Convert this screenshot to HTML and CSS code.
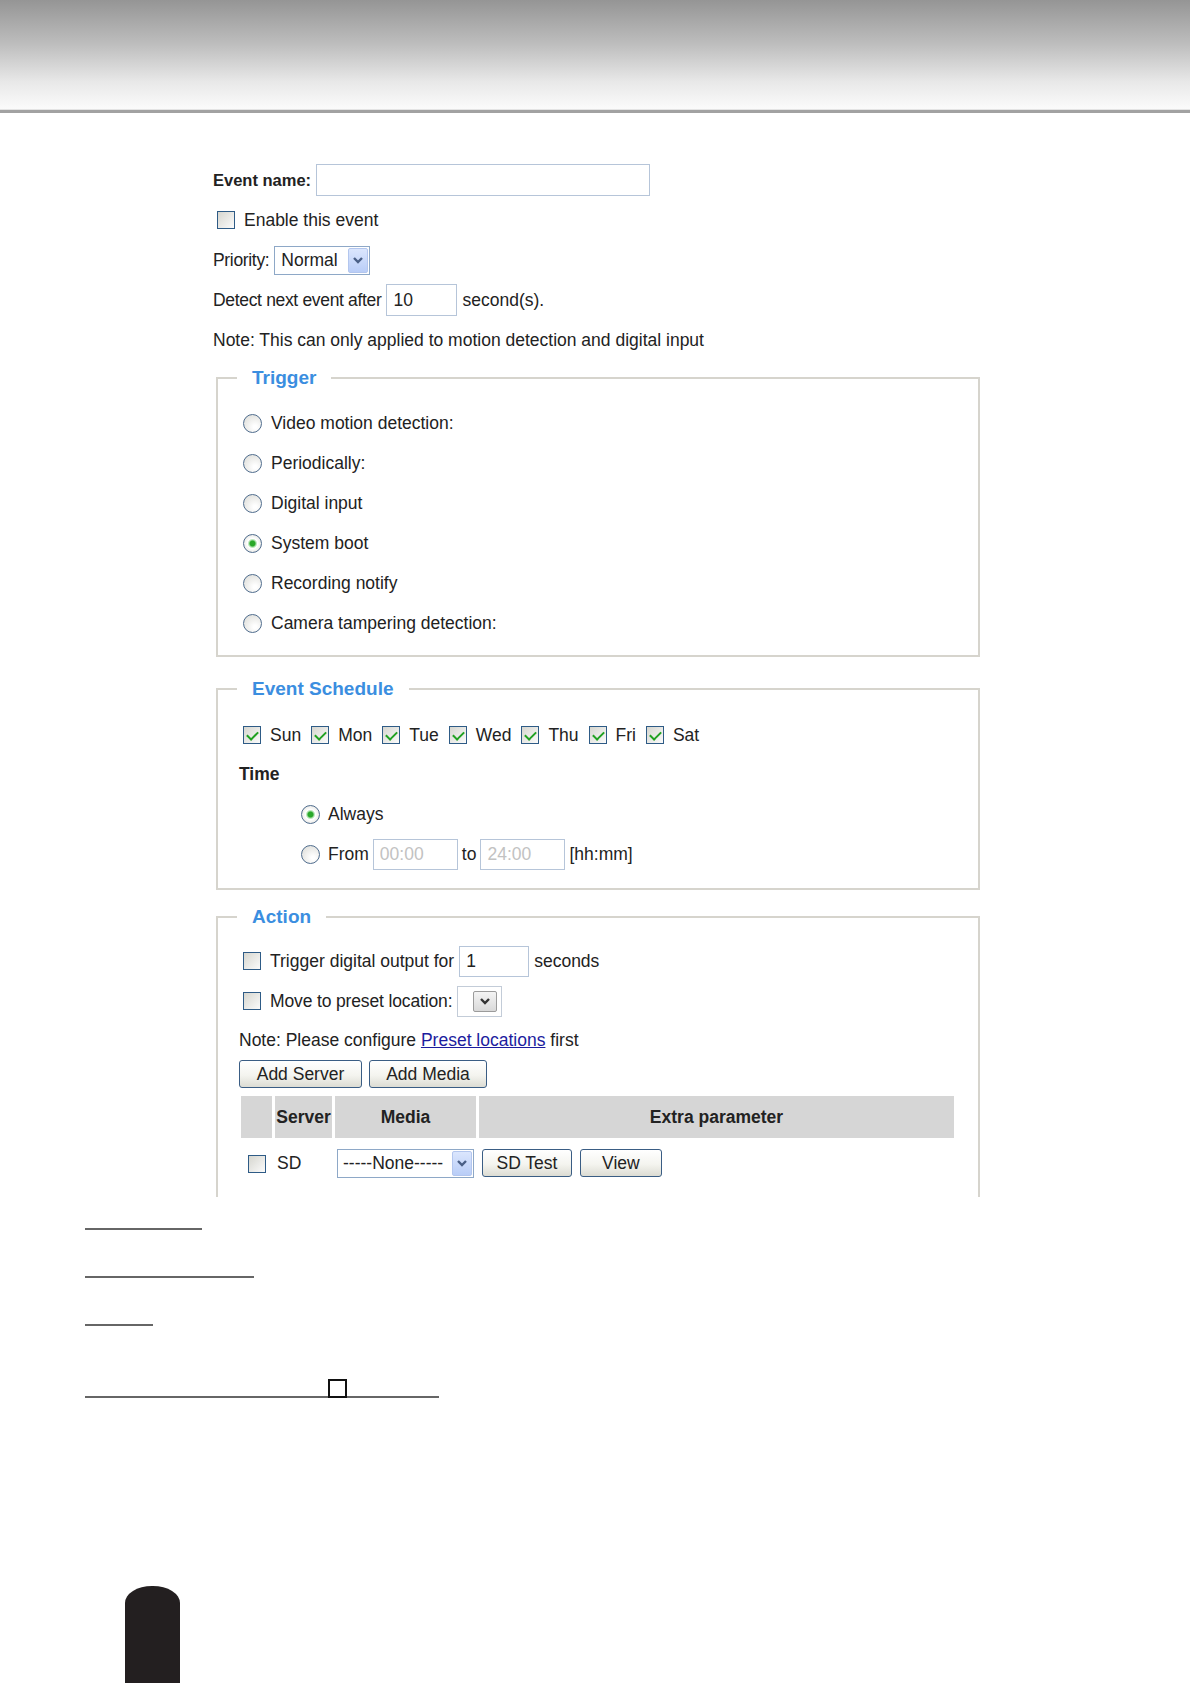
FILE: index.html
```html
<!DOCTYPE html>
<html lang="en">
<head>
    <meta charset="UTF-8">
    <meta name="viewport" content="width=device-width, initial-scale=1.0">
    <title>Event Settings</title>
    <link rel="stylesheet" href="styles.css">
</head>
<body>
    <div class="page-header"></div>
    <div class="header-rule"></div>

    <div class="form-area">
        <div class="row">
            <label class="strong name-label" for="eventName">Event name:</label>
            <input type="text" id="eventName" class="text-input name-input">
        </div>
        <div class="row">
            <input type="checkbox" class="check" id="enableEvent">
            <label for="enableEvent">Enable this event</label>
        </div>
        <div class="row">
            <span class="tight">Priority:</span>
            <span class="select priority-select">
                <span class="select-value">Normal</span>
                <span class="select-btn">
                    <svg width="12" height="8" viewBox="0 0 12 8"><polyline points="2,2 6,6 10,2" fill="none" stroke="#4a5f86" stroke-width="2.4"/></svg>
                </span>
            </span>
        </div>
        <div class="row">
            <label class="tight" for="detectAfter">Detect next event after</label>
            <input type="text" id="detectAfter" class="text-input short-input" value="10">
            <span>second(s).</span>
        </div>
        <div class="row">
            <span>Note: This can only applied to motion detection and digital input</span>
        </div>

        <fieldset class="group trigger-group">
            <legend>Trigger</legend>
            <div class="row">
                <input type="radio" class="radio" name="trigger" id="trVideo">
                <label for="trVideo">Video motion detection:</label>
            </div>
            <div class="row">
                <input type="radio" class="radio" name="trigger" id="trPeriod">
                <label for="trPeriod">Periodically:</label>
            </div>
            <div class="row">
                <input type="radio" class="radio" name="trigger" id="trDigital">
                <label for="trDigital">Digital input</label>
            </div>
            <div class="row">
                <input type="radio" class="radio" name="trigger" id="trBoot" checked>
                <label for="trBoot">System boot</label>
            </div>
            <div class="row">
                <input type="radio" class="radio" name="trigger" id="trRecord">
                <label for="trRecord">Recording notify</label>
            </div>
            <div class="row">
                <input type="radio" class="radio" name="trigger" id="trTamper">
                <label for="trTamper">Camera tampering detection:</label>
            </div>
        </fieldset>

        <fieldset class="group schedule-group">
            <legend>Event Schedule</legend>
            <div class="row days-row">
                <span class="day"><input type="checkbox" class="check" checked>Sun</span>
                <span class="day"><input type="checkbox" class="check" checked>Mon</span>
                <span class="day"><input type="checkbox" class="check" checked>Tue</span>
                <span class="day"><input type="checkbox" class="check" checked>Wed</span>
                <span class="day"><input type="checkbox" class="check" checked>Thu</span>
                <span class="day"><input type="checkbox" class="check" checked>Fri</span>
                <span class="day"><input type="checkbox" class="check" checked>Sat</span>
            </div>
            <div class="row">
                <span class="strong">Time</span>
            </div>
            <div class="row time-row">
                <input type="radio" class="radio" name="time" id="timeAlways" checked>
                <label for="timeAlways">Always</label>
            </div>
            <div class="row time-row">
                <input type="radio" class="radio" name="time" id="timeFrom">
                <label for="timeFrom">From</label>
                <input type="text" class="text-input time-input" value="00:00" disabled>
                <span>to</span>
                <input type="text" class="text-input time-input" value="24:00" disabled>
                <span>[hh:mm]</span>
            </div>
        </fieldset>

        <fieldset class="group action-group">
            <legend>Action</legend>
            <div class="row">
                <input type="checkbox" class="check" id="actDigital">
                <label for="actDigital">Trigger digital output for</label>
                <input type="text" class="text-input seconds-input" value="1">
                <span>seconds</span>
            </div>
            <div class="row">
                <input type="checkbox" class="check" id="actPreset">
                <label class="slight" for="actPreset">Move to preset location:</label>
                <span class="select preset-select">
                    <span class="select-btn gray">
                        <svg width="12" height="8" viewBox="0 0 12 8"><polyline points="2,2 6,6 10,2" fill="none" stroke="#333" stroke-width="2.4"/></svg>
                    </span>
                </span>
            </div>
            <div class="row note-row">
                <span>Note: Please configure <a href="#">Preset locations</a> first</span>
            </div>
            <div class="row button-row">
                <button class="btn btn-server">Add Server</button>
                <button class="btn btn-media">Add Media</button>
            </div>
            <table class="server-table">
                <tr>
                    <th class="col-check"></th>
                    <th class="col-server">Server</th>
                    <th class="col-media">Media</th>
                    <th>Extra parameter</th>
                </tr>
                <tr>
                    <td class="cell-check"><input type="checkbox" class="check"></td>
                    <td class="cell-server">SD</td>
                    <td class="cell-media">
                        <span class="select media-select">
                            <span class="select-value">-----None-----</span>
                            <span class="select-btn">
                                <svg width="12" height="8" viewBox="0 0 12 8"><polyline points="2,2 6,6 10,2" fill="none" stroke="#4a5f86" stroke-width="2.4"/></svg>
                            </span>
                        </span>
                    </td>
                    <td class="cell-extra">
                        <button class="btn btn-test">SD Test</button>
                        <button class="btn btn-view">View</button>
                    </td>
                </tr>
            </table>
        </fieldset>
    </div>

    <div class="blanks">
        <div class="blank blank-1"></div>
        <div class="blank blank-2"></div>
        <div class="blank blank-3"></div>
        <div class="blank-box"><span class="tick-box"></span></div>
        <div class="page-tab"></div>
    </div>
</body>
</html>
```

FILE: styles.css
```css
* {
    box-sizing: border-box;
    margin: 0;
    padding: 0;
}

body {
    font-family: "Liberation Sans", Arial, sans-serif;
    font-size: 17.5px;
    color: #222;
    background-color: #fff;
    height: 1684px;
    overflow: hidden;
}

.page-header {
    height: 110px;
    background: linear-gradient(#959595, #bdbdbd 40%, #e8e8e8 75%, #fbfbfb);
    border-bottom: 1px solid #e4e4e4;
}

.header-rule {
    height: 3px;
    background-color: #a2a2a2;
}

/* form, clipped where the page cuts it */
.form-area {
    height: 1084px;
    overflow: hidden;
    padding: 47px 0 0 213px;
}

.row {
    display: flex;
    align-items: center;
    gap: 5px;
    height: 40px;
    white-space: nowrap;
}

.strong {
    font-weight: bold;
}

.name-label {
    font-size: 16.5px;
}

.tight {
    letter-spacing: -0.33px;
}

.slight {
    letter-spacing: -0.14px;
}

.text-input {
    height: 32px;
    border: 1px solid #b6c5d9;
    padding: 0 6px;
    font-family: inherit;
    font-size: 17.5px;
    color: #222;
    background-color: #fff;
}

.text-input:disabled {
    color: #c2c2c2;
    background-color: #fff;
    height: 31px;
}

.name-input {
    width: 334px;
}

.short-input {
    width: 71px;
}

.seconds-input {
    width: 70px;
    height: 31px;
}

.time-input {
    width: 85px;
}

/* select boxes */
.select {
    display: inline-flex;
    align-items: center;
    height: 29px;
    border: 1px solid #8ea8c7;
    padding: 0 1px 0 6px;
    background-color: #fff;
}

.select-value {
    flex: 1;
}

.select-btn {
    width: 20px;
    height: 25px;
    display: flex;
    align-items: center;
    justify-content: center;
    background: linear-gradient(#dbe6fd, #b9cdf7);
    border: 1px solid #b3c6ee;
    border-radius: 2px;
}

.select-btn.gray {
    width: 24px;
    height: 21px;
    background: linear-gradient(#f4f4f4, #d9d9d9);
    border: 1px solid #9b9b9b;
}

.priority-select {
    width: 96px;
}

.preset-select {
    width: 45px;
    height: 31px;
    border-color: #c3ccd8;
    padding: 0 4px 0 15px;
}

.media-select {
    width: 137px;
    padding-left: 5px;
}

/* checkboxes and radios */
.check {
    appearance: none;
    position: relative;
    flex: none;
    width: 18px;
    height: 18px;
    margin: 0 4px 0 4px;
    border: 1px solid #2e5b86;
    background: linear-gradient(135deg, #d6d6cf, #fbfbfb);
}

.check:checked::after {
    content: "";
    position: absolute;
    left: 5px;
    top: 2px;
    width: 5px;
    height: 9px;
    border: solid #21a121;
    border-width: 0 2.5px 2.5px 0;
    transform: rotate(45deg);
}

.radio {
    appearance: none;
    flex: none;
    width: 19px;
    height: 19px;
    margin: 0 4px 0 4px;
    border: 1.5px solid #4f6c8d;
    border-radius: 50%;
    background: radial-gradient(circle at 65% 70%, #fff 10%, #d9d9d4);
}

.radio:checked {
    background: radial-gradient(circle, #29a829 0, #29a829 2.5px, #9fdc9f 3.5px, #fff 5px, #e6e6e2 80%);
}

/* fieldsets */
.group {
    width: 764px;
    margin-left: 3px;
    border: 2px solid #d6d4cd;
    padding: 13px 21px 12px 21px;
}

.group legend {
    margin-left: -2px;
    padding: 0 15px;
    line-height: 24px;
    font-size: 19px;
    font-weight: bold;
    color: #3b8ee0;
}

.trigger-group {
    margin-top: 6px;
}

.schedule-group {
    margin-top: 20px;
    padding-top: 15px;
    padding-bottom: 14px;
}

.action-group {
    margin-top: 15px;
    padding-top: 12px;
    padding-bottom: 60px;
}

.days-row {
    height: 38px;
    gap: 6px;
}

.day {
    display: flex;
    align-items: center;
}

.day .check {
    margin-right: 9px;
}

.group .row > .check,
.group .row > .radio {
    margin-right: 4px;
}

.time-row {
    padding-left: 58px;
    gap: 4px;
}

.time-row .radio {
    margin-right: 6px;
}

.note-row {
    height: 38px;
}

.note-row a {
    color: #1c1c9e;
}

.button-row {
    height: 30px;
    gap: 7px;
}

.btn {
    height: 28px;
    border: 1px solid #3a5d84;
    border-radius: 3px;
    background: linear-gradient(#ffffff, #f4f4ef 55%, #dcdcd3);
    font-family: inherit;
    font-size: 17.5px;
    color: #222;
}

.btn-server {
    width: 123px;
}

.btn-media {
    width: 118px;
}

.btn-test {
    width: 90px;
}

.btn-view {
    width: 82px;
    margin-left: 3px;
}

/* server table */
.server-table {
    margin-top: 4px;
    margin-left: -1px;
    width: 719px;
    border-spacing: 3px;
}

.server-table th {
    height: 42px;
    background-color: #d6d6d6;
    font-weight: bold;
    text-align: center;
}

.col-check {
    width: 31px;
}

.col-server {
    width: 57px;
}

.col-media {
    width: 141px;
}

.server-table td {
    height: 44px;
}

.cell-check {
    text-align: center;
}

.cell-check .check {
    margin: 0;
    vertical-align: middle;
}

.cell-server {
    padding-left: 2px;
}

.cell-media {
    padding-left: 2px;
}

.cell-extra {
    padding-left: 3px;
}

/* blank lines below the form */
.blanks {
    padding-left: 85px;
}

.blank {
    height: 2px;
    background-color: #666;
}

.blank-1 {
    width: 117px;
    margin-top: 31px;
}

.blank-2 {
    width: 169px;
    margin-top: 46px;
}

.blank-3 {
    width: 68px;
    margin-top: 46px;
}

.blank-box {
    display: flex;
    align-items: flex-end;
    width: 354px;
    margin-top: 53px;
    padding-left: 243px;
    border-bottom: 2px solid #666;
}

.tick-box {
    width: 19px;
    height: 19px;
    margin-bottom: -2px;
    border: 2px solid #111;
    background-color: #fff;
}

.page-tab {
    width: 55px;
    height: 97px;
    margin: 188px 0 0 40px;
    background-color: #231f20;
    border-radius: 27px 27px 0 0 / 17px 17px 0 0;
}
```
